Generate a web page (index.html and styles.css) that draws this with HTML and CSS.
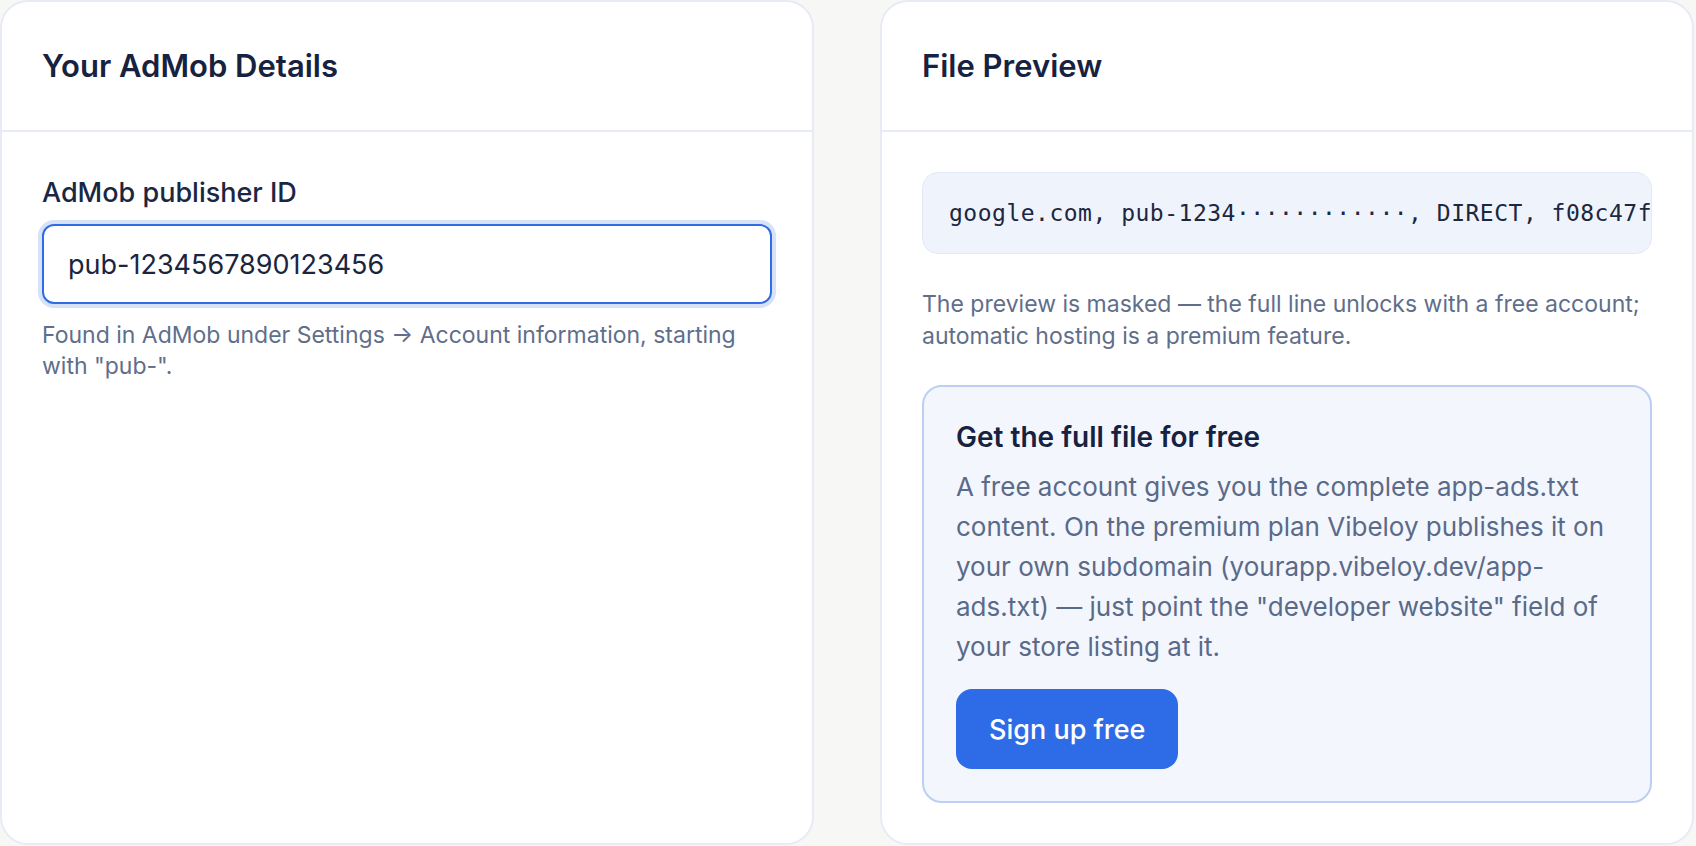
FILE: index.html
```html
<!DOCTYPE html>
<html lang="en">
<head>
    <meta charset="UTF-8">
    <meta name="viewport" content="width=device-width, initial-scale=1.0">
    <title>app-ads.txt Generator</title>
    <link rel="stylesheet" href="styles.css">
</head>
<body>

    <main class="grid">
        <section class="card">
            <div class="card-header">
                <h2>Your AdMob Details</h2>
            </div>
            <div class="card-body">
                <label for="publisherId" class="field-label">AdMob publisher ID</label>
                <input type="text" id="publisherId" class="field-input" value="pub-1234567890123456">
                <p class="field-hint">Found in AdMob under Settings &rarr; Account information, starting with "pub-".</p>
            </div>
        </section>

        <section class="card">
            <div class="card-header">
                <h2>File Preview</h2>
            </div>
            <div class="card-body">
                <pre class="code-preview">google.com, pub-1234&middot;&middot;&middot;&middot;&middot;&middot;&middot;&middot;&middot;&middot;&middot;&middot;, DIRECT, f08c47f</pre>
                <p class="preview-note">The preview is masked &mdash; the full line unlocks with a free account; automatic hosting is a premium feature.</p>

                <div class="cta-box">
                    <h3>Get the full file for free</h3>
                    <p>A free account gives you the complete app-ads.txt content. On the premium plan Vibeloy publishes it on your own subdomain (yourapp.vibeloy.dev/app-ads.txt) &mdash; just point the "developer website" field of your store listing at it.</p>
                    <button type="button" class="btn-primary">Sign up free</button>
                </div>
            </div>
        </section>
    </main>

</body>
</html>
```

FILE: styles.css
```css
body {
    margin: 0;
    background-color: #f7f7f5;
    font-family: Inter, "Noto Sans", sans-serif;
    color: #17233f;
}

.grid {
    display: grid;
    grid-template-columns: 814px 814px;
    gap: 66px;
}

.card {
    background-color: #fff;
    border: 2px solid #e6ebf5;
    border-radius: 28px;
    overflow: hidden;
}

.card-header {
    padding: 40px;
    border-bottom: 2px solid #e6ebf5;
}

.card-header h2 {
    margin: 0;
    font-size: 31px;
    line-height: 48px;
    font-weight: 600;
    color: #16223f;
}

.card-body {
    padding: 40px;
}

.field-label {
    display: block;
    margin: 2px 0 12px;
    font-size: 27px;
    line-height: 38px;
    font-weight: 500;
    color: #1a2743;
}

.field-input {
    display: block;
    width: 100%;
    height: 80px;
    padding: 0 24px;
    box-sizing: border-box;
    border: 2px solid #2f6de4;
    border-radius: 12px;
    box-shadow: 0 0 0 4px #d6e2f8;
    font-family: inherit;
    font-size: 27px;
    color: #1a2540;
    outline: none;
}

.field-hint {
    margin: 16px 0 0;
    font-size: 23px;
    line-height: 31px;
    color: #5f6e8a;
}

.code-preview {
    margin: 0;
    padding: 23px 26px;
    background-color: #eff3fb;
    border: 1px solid #e2e8f4;
    border-radius: 16px;
    overflow: hidden;
    font-family: "DejaVu Sans Mono", "Liberation Mono", monospace;
    font-size: 23px;
    line-height: 34px;
    letter-spacing: 0.5px;
    color: #1c2740;
}

.preview-note {
    margin: 34px 0 33px;
    font-size: 23px;
    line-height: 32px;
    color: #5f6e8a;
}

.cta-box {
    padding: 32px;
    background-color: #f3f6fd;
    border: 2px solid #bccff3;
    border-radius: 20px;
}

.cta-box h3 {
    margin: 0 0 12px;
    font-size: 28px;
    line-height: 36px;
    font-weight: 600;
    color: #16223f;
}

.cta-box p {
    margin: 0;
    font-size: 26px;
    line-height: 40px;
    color: #5a6a88;
}

.btn-primary {
    margin-top: 22px;
    height: 80px;
    padding: 0 33px;
    background-color: #2e6be6;
    color: #fff;
    border: none;
    border-radius: 16px;
    font-family: inherit;
    font-size: 27px;
    font-weight: 500;
    cursor: pointer;
}
```
